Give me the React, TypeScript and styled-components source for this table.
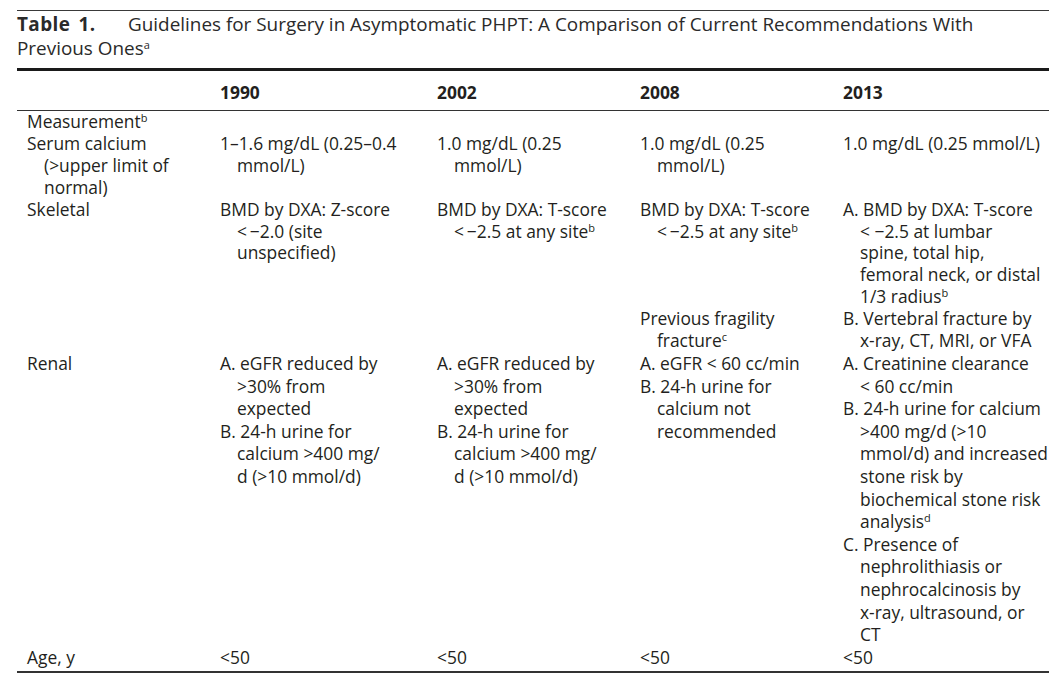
import React from 'react';
import styled, { createGlobalStyle } from 'styled-components';

const GlobalStyle = createGlobalStyle`
  html, body {
    margin: 0;
    padding: 0;
    background: #ffffff;
  }
  body {
    font-family: "Open Sans", "Noto Sans", sans-serif;
    color: #231f20;
    overflow: hidden;
  }
`;

const Page = styled.div`
  padding: 10px 0 0 17px;
  width: 1032px;
`;

const Caption = styled.div`
  border-top: 1px solid #3a3a3a;
  padding-top: 1px;
  font-size: 18.9px;
  line-height: 24px;
  color: #2a2a2a;
`;

const CaptionLabel = styled.span`
  display: inline-block;
  width: 111px;
  font-weight: 700;
  letter-spacing: 0.4px;
  word-spacing: 3px;
`;

const Table = styled.table`
  width: 100%;
  margin-top: 8px;
  border-collapse: collapse;
  table-layout: fixed;
  border-top: 3px solid #1a1a1a;
  border-bottom: 2px solid #333;
  font-size: 17.4px;
  line-height: 21.9px;
`;

const HeadCell = styled.th`
  text-align: left;
  font-weight: 700;
  padding: 10px 0 7px;
  border-bottom: 1px solid #333;
  line-height: 22px;
`;

const Cell = styled.td<{ $label?: boolean; $loose?: boolean; $last?: boolean }>`
  vertical-align: top;
  padding: 0 0 ${({ $last }) => ($last ? '3px' : '0')} ${({ $label }) => ($label ? '10px' : '0')};
  line-height: ${({ $loose }) => ($loose ? '22.6px' : 'inherit')};
  white-space: nowrap;
`;

const Item = styled.div`
  padding-left: 17px;
  text-indent: -17px;
`;

const Sup = styled.sup`
  font-size: 11px;
  line-height: 0;
  vertical-align: 6px;
`;

const years = ['1990', '2002', '2008', '2013'];

const App: React.FC = () => (
  <>
    <GlobalStyle />
    <Page>
      <Caption>
        <CaptionLabel>Table 1.</CaptionLabel>
        Guidelines for Surgery in Asymptomatic PHPT: A Comparison of Current Recommendations With
        <br />
        Previous Ones<Sup>a</Sup>
      </Caption>
      <Table>
        <colgroup>
          <col style={{ width: 203 }} />
          <col style={{ width: 217 }} />
          <col style={{ width: 203 }} />
          <col style={{ width: 203 }} />
          <col />
        </colgroup>
        <thead>
          <tr>
            <HeadCell />
            {years.map((y) => (
              <HeadCell key={y}>{y}</HeadCell>
            ))}
          </tr>
        </thead>
        <tbody>
          <tr>
            <Cell $label>
              Measurement<Sup>b</Sup>
            </Cell>
            <Cell />
            <Cell />
            <Cell />
            <Cell />
          </tr>
          <tr>
            <Cell $label>
              <Item>
                Serum calcium
                <br />
                (&gt;upper limit of
                <br />
                normal)
              </Item>
            </Cell>
            <Cell>
              <Item>
                1–1.6 mg/dL (0.25–0.4
                <br />
                mmol/L)
              </Item>
            </Cell>
            <Cell>
              <Item>
                1.0 mg/dL (0.25
                <br />
                mmol/L)
              </Item>
            </Cell>
            <Cell>
              <Item>
                1.0 mg/dL (0.25
                <br />
                mmol/L)
              </Item>
            </Cell>
            <Cell>
              <Item>1.0 mg/dL (0.25 mmol/L)</Item>
            </Cell>
          </tr>
          <tr>
            <Cell $label>Skeletal</Cell>
            <Cell>
              <Item>
                BMD by DXA: Z-score
                <br />
                &lt;{'\u2009'}−2.0 (site
                <br />
                unspecified)
              </Item>
            </Cell>
            <Cell>
              <Item>
                BMD by DXA: T-score
                <br />
                &lt;{'\u2009'}−2.5 at any site<Sup>b</Sup>
              </Item>
            </Cell>
            <Cell>
              <Item>
                BMD by DXA: T-score
                <br />
                &lt;{'\u2009'}−2.5 at any site<Sup>b</Sup>
              </Item>
            </Cell>
            <Cell>
              <Item>
                A. BMD by DXA: T-score
                <br />
                &lt; −2.5 at lumbar
                <br />
                spine, total hip,
                <br />
                femoral neck, or distal
                <br />
                1/3 radius<Sup>b</Sup>
              </Item>
            </Cell>
          </tr>
          <tr>
            <Cell $label />
            <Cell />
            <Cell />
            <Cell>
              <Item>
                Previous fragility
                <br />
                fracture<Sup>c</Sup>
              </Item>
            </Cell>
            <Cell>
              <Item>
                B. Vertebral fracture by
                <br />
                x-ray, CT, MRI, or VFA
              </Item>
            </Cell>
          </tr>
          <tr>
            <Cell $label $loose>
              Renal
            </Cell>
            <Cell $loose>
              <Item>
                A. eGFR reduced by
                <br />
                &gt;30% from
                <br />
                expected
              </Item>
              <Item>
                B. 24-h urine for
                <br />
                calcium &gt;400 mg/
                <br />
                d (&gt;10 mmol/d)
              </Item>
            </Cell>
            <Cell $loose>
              <Item>
                A. eGFR reduced by
                <br />
                &gt;30% from
                <br />
                expected
              </Item>
              <Item>
                B. 24-h urine for
                <br />
                calcium &gt;400 mg/
                <br />
                d (&gt;10 mmol/d)
              </Item>
            </Cell>
            <Cell $loose>
              <Item>A. eGFR &lt; 60 cc/min</Item>
              <Item>
                B. 24-h urine for
                <br />
                calcium not
                <br />
                recommended
              </Item>
            </Cell>
            <Cell $loose>
              <Item>
                A. Creatinine clearance
                <br />
                &lt; 60 cc/min
              </Item>
              <Item>
                B. 24-h urine for calcium
                <br />
                &gt;400 mg/d (&gt;10
                <br />
                mmol/d) and increased
                <br />
                stone risk by
                <br />
                biochemical stone risk
                <br />
                analysis<Sup>d</Sup>
              </Item>
              <Item>
                C. Presence of
                <br />
                nephrolithiasis or
                <br />
                nephrocalcinosis by
                <br />
                x-ray, ultrasound, or
                <br />
                CT
              </Item>
            </Cell>
          </tr>
          <tr>
            <Cell $label $loose $last>
              Age, y
            </Cell>
            {years.map((y) => (
              <Cell key={y} $loose $last>
                &lt;50
              </Cell>
            ))}
          </tr>
        </tbody>
      </Table>
    </Page>
  </>
);

export default App;
